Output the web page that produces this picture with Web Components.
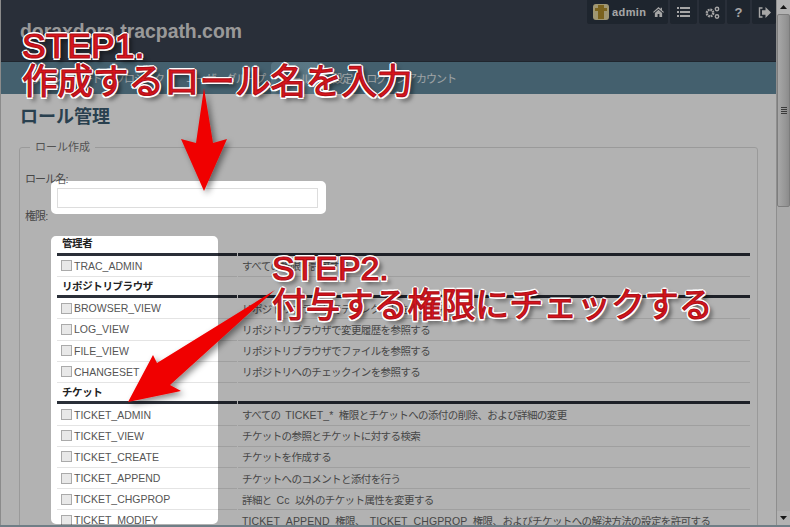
<!DOCTYPE html>
<html lang="ja">
<head>
<meta charset="utf-8">
<title>ロール管理</title>
<style>
  html, body { margin: 0; height: 100%; overflow: hidden; }
  body { font-family: "Liberation Sans", "Noto Sans CJK JP", sans-serif; }
</style>
</head>
<body>
<app-shell>
  <page-header></page-header>
  <site-tabs></site-tabs>
  <role-page></role-page>
</app-shell>
<script>
const FONT = '"Liberation Sans", "Noto Sans CJK JP", sans-serif';

class AppShell extends HTMLElement {
  constructor() {
    super();
    this.attachShadow({ mode: 'open' });
    this.shadowRoot.innerHTML = `
      <style>
        :host { display: flex; flex-direction: column; position: relative; width: 790px; height: 527px; overflow: hidden; background: #fff; }
        .body { flex: 1; min-height: 0; display: flex; }
        .main { flex: 1; min-width: 0; display: flex; flex-direction: column; overflow: hidden; border-left: 1px solid #c8c8c8; }
        .edge { flex: none; height: 2px; background: #9fb5c0; }
      </style>
      <div class="body">
        <div class="main"><slot></slot></div>
        <fake-scrollbar></fake-scrollbar>
      </div>
      <div class="edge"></div>
      <tutorial-overlay></tutorial-overlay>
    `;
  }
}

class FakeScrollbar extends HTMLElement {
  constructor() {
    super();
    this.attachShadow({ mode: 'open' });
    this.shadowRoot.innerHTML = `
      <style>
        :host { display: flex; flex-direction: column; flex: none; width: 14px; height: 100%; background: #f4f4f4; border-left: 1px solid #ccc; box-sizing: border-box; }
        .btn { flex: none; height: 14px; background: #fff; display: flex; align-items: center; justify-content: center; }
        .thumb { flex: none; height: 193px; background: linear-gradient(90deg, #f0f0f0, #d6d6d6 70%, #c8c8c8); border: 1px solid #b4b4b4; border-radius: 2px; box-sizing: border-box; display: flex; align-items: center; justify-content: center; }
        .grip { width: 6px; height: 7px; background: repeating-linear-gradient(#555 0 1px, transparent 1px 2px); }
        .track { flex: 1; }
        svg { display: block; }
      </style>
      <div class="btn"><svg width="7" height="4"><path d="M0 4L3.500 0L7 4z" fill="#222"/></svg></div>
      <div class="thumb"><div class="grip"></div></div>
      <div class="track"></div>
      <div class="btn"><svg width="7" height="4"><path d="M0 0L3.500 4L7 0z" fill="#222"/></svg></div>
    `;
  }
}

class PageHeader extends HTMLElement {
  constructor() {
    super();
    this.attachShadow({ mode: 'open' });
    this.shadowRoot.innerHTML = `
      <style>
        :host { display: flex; flex: none; justify-content: space-between; align-items: flex-start; height: 62px; background: #3c4452; border-bottom: 1px solid #2f3742; box-sizing: border-box; font-family: ${FONT}; }
        h1 { margin: 21px 0 0 19px; font-size: 19.400px; line-height: 20px; color: #dcdcdc; font-weight: bold; }
        .tools { display: flex; gap: 2px; }
        .cell { background: #2c3542; display: flex; align-items: center; justify-content: center; height: 24px; color: #eee; border-radius: 0 0 2px 2px; }
        .cell.user { width: 81px; padding-left: 6px; justify-content: flex-start; box-sizing: border-box; font-size: 11px; font-weight: bold; letter-spacing: .4px; }
        .cell.user span { margin: 0 7px 0 3px; }
        svg { display: block; }
        .q { font-size: 13px; font-weight: bold; }
      </style>
      <h1>doraxdora.tracpath.com</h1>
      <div class="tools">
        <div class="cell user">
          <svg width="16" height="16" viewBox="0 0 16 16"><rect width="16" height="16" rx="3" fill="#e6d9a4"/><path d="M5 1h6v3h3v3h-3v8H5V7H2V4h3z" fill="#b08f2c"/></svg>
          <span>admin</span>
          <svg width="11" height="10" viewBox="0 0 12 11"><path d="M6 0L0 5.500l.8.8L6 1.800l5.200 4.500.8-.8L9.800 3.600V.8H8.400v1.500zM2 6.500V11h3V7.800h2V11h3V6.500L6 3z" fill="#eee"/></svg>
        </div>
        <div class="cell" style="width:27px"><svg width="13" height="10" viewBox="0 0 13 10"><path d="M0 0h2v2H0zM3 0h10v2H3zM0 4h2v2H0zM3 4h10v2H3zM0 8h2v2H0zM3 8h10v2H3z" fill="#eee"/></svg></div>
        <div class="cell" style="width:26px"><svg width="15" height="13" viewBox="0 0 15 13"><circle cx="5" cy="7" r="3.200" fill="none" stroke="#eee" stroke-width="2.400" stroke-dasharray="1.800 .7"/><circle cx="12" cy="3" r="1.700" fill="none" stroke="#eee" stroke-width="1.400"/><circle cx="12" cy="10.500" r="1.700" fill="none" stroke="#eee" stroke-width="1.400"/></svg></div>
        <div class="cell q" style="width:23px">?</div>
        <div class="cell" style="width:24px"><svg width="13" height="11" viewBox="0 0 13 11"><path d="M4.500 1H1.500v9h3" fill="none" stroke="#eee" stroke-width="1.400"/><path d="M7.500 0L13 5.500L7.500 11V7.800H4V3.200h3.500z" fill="#eee"/></svg></div>
      </div>
    `;
  }
}

class SiteTabs extends HTMLElement {
  constructor() {
    super();
    this.attachShadow({ mode: 'open' });
    this.shadowRoot.innerHTML = `
      <style>
        :host { display: flex; flex: none; height: 32px; padding-left: 25px; background: #628a9e; font-family: ${FONT}; font-size: 11px; color: #e4eaee; white-space: nowrap; letter-spacing: -1px; }
        a { display: flex; align-items: center; padding: 0 6px; border-radius: 4px 4px 0 0; }
        a.on { padding: 0 9px; background: linear-gradient(90deg, #7ba6ba, #83adc0); }
        a.set { padding: 0 8px 0 13px; }
      </style>
      <a>ダッシュボード</a>
      <a>プロジェクト</a>
      <a>ユーザーグループ</a>
      <a class="on">ロール</a>
      <a class="set">設定</a>
      <a>ログインアカウント</a>
    `;
  }
}

class PermTable extends HTMLElement {
  constructor() {
    super();
    this.attachShadow({ mode: 'open' });
    const groups = [
      ['管理者', [['TRAC_ADMIN', 'すべての権限を許可する']]],
      ['リポジトリブラウザ', [
        ['BROWSER_VIEW', 'リポジトリブラウザでディレクトリを参照する'],
        ['LOG_VIEW', 'リポジトリブラウザで変更履歴を参照する'],
        ['FILE_VIEW', 'リポジトリブラウザでファイルを参照する'],
        ['CHANGESET', 'リポジトリへのチェックインを参照する']
      ]],
      ['チケット', [
        ['TICKET_ADMIN', 'すべての TICKET_* 権限とチケットへの添付の削除、および詳細の変更'],
        ['TICKET_VIEW', 'チケットの参照とチケットに対する検索'],
        ['TICKET_CREATE', 'チケットを作成する'],
        ['TICKET_APPEND', 'チケットへのコメントと添付を行う'],
        ['TICKET_CHGPROP', '詳細と Cc 以外のチケット属性を変更する'],
        ['TICKET_MODIFY', 'TICKET_APPEND 権限、 TICKET_CHGPROP 権限、およびチケットへの解決方法の設定を許可する']
      ]]
    ];
    const latin = s => s.replace(/[A-Za-z_*]+ ?/g, m => `<span class="l">${m}</span>`);
    this.shadowRoot.innerHTML = `
      <style>
        :host { display: block; font-family: ${FONT}; font-size: 10.500px; color: #555; }
        .grp, .row { display: grid; grid-template-columns: 180px 1fr; column-gap: 1px; }
        .grp { height: 21.500px; }
        .grp b, .grp i { display: block; border-bottom: 3px solid #2a2f38; height: 21.500px; box-sizing: border-box; font-style: normal; }
        .grp b { padding: 2px 0 0 5px; font-size: 10.500px; line-height: 14px; color: #222; letter-spacing: -.4px; }
        .row { height: 21.200px; }
        .row > div { border-bottom: 1px solid #e4e4e4; display: flex; align-items: center; box-sizing: border-box; white-space: pre; }
        .name { padding-left: 4px; gap: 2px; }
        .desc { padding-left: 4px; letter-spacing: -.6px; word-spacing: 2.500px; color: #666; }
        .l { letter-spacing: .1px; }
        .box { width: 9px; height: 9px; flex: none; border: 1px solid #aaa; background: #e8e8e8; }
      </style>
      ${groups.map(([title, rows]) => `
        <div class="grp"><b>${title}</b><i></i></div>
        ${rows.map(([name, desc]) => `
          <div class="row">
            <div class="name"><span class="box"></span>${name}</div>
            <div class="desc"><span>${latin(desc)}</span></div>
          </div>`).join('')}
      `).join('')}
    `;
  }
}

class RolePage extends HTMLElement {
  constructor() {
    super();
    this.attachShadow({ mode: 'open' });
    this.shadowRoot.innerHTML = `
      <style>
        :host { display: block; flex: 1; min-height: 0; padding: 0 18px; background: #fff; font-family: ${FONT}; font-size: 11px; color: #666; }
        h2 { margin: 0; padding: 13px 0 0 1px; height: 46px; box-sizing: border-box; font-size: 18px; line-height: 20px; color: #3c5c72; }
        fieldset { margin: 0; padding: 18px 5px 0; border: 1px solid #ddd; border-radius: 3px; min-width: 0; height: 600px; box-sizing: border-box; }
        legend { margin-left: 5px; padding: 0 5px; font-size: 11px; line-height: 14px; color: #777; }
        label { display: block; line-height: 14px; letter-spacing: -.9px; }
        .input { width: 261px; height: 20px; box-sizing: border-box; border: 1px solid #ddd; background: #fff; margin: 2px 0 0 32px; }
        .perm { margin-top: 1px; }
        perm-table { margin: 11px 2px 0 32px; }
      </style>
      <h2>ロール管理</h2>
      <fieldset>
        <legend>ロール作成</legend>
        <label>ロール名:</label>
        <div class="input"></div>
        <label class="perm">権限:</label>
        <perm-table></perm-table>
      </fieldset>
    `;
  }
}

class TutorialOverlay extends HTMLElement {
  constructor() {
    super();
    this.attachShadow({ mode: 'open' });
    this.shadowRoot.innerHTML = `
      <style>
        :host { position: absolute; inset: 0; display: block; pointer-events: none; font-family: ${FONT}; }
        svg { position: absolute; inset: 0; }
        .step { position: absolute; margin: 0; color: #d8141c; font-weight: normal; white-space: nowrap;
          -webkit-text-stroke: 1.200px #b01018;
          text-shadow: -2px 0 0 #fff, 2px 0 0 #fff, 0 -2px 0 #fff, 0 2px 0 #fff, -1.500px -1.500px 0 #fff, 1.500px 1.500px 0 #fff, -1.500px 1.500px 0 #fff, 1.500px -1.500px 0 #fff, 4px 4px 4px rgba(0,0,0,.6); }
        .s1 { left: 22px; top: 28px; font-size: 35.500px; line-height: 36px; }
        .s2 { left: 272px; top: 250px; font-size: 33.900px; line-height: 37px; }
      </style>
      <svg width="790" height="527" viewBox="0 0 790 527">
        <defs>
          <filter id="sh" x="-30%" y="-30%" width="160%" height="160%"><feDropShadow dx="3" dy="3" stdDeviation="3" flood-color="#000" flood-opacity=".45"/></filter>
        </defs>
        <path fill="#000" fill-opacity=".3" fill-rule="evenodd" d="M0 0H790V527H0Z
          M56 181H321a5 5 0 0 1 5 5V209a5 5 0 0 1-5 5H56a5 5 0 0 1-5-5V186a5 5 0 0 1 5-5Z
          M56 236H213a5 5 0 0 1 5 5V519a5 5 0 0 1-5 5H56a5 5 0 0 1-5-5V241a5 5 0 0 1 5-5Z"/>
        <path filter="url(#sh)" fill="#f00000" d="M204 88L213 143L227 139L204 191L181 139L196 143Z"/>
        <path filter="url(#sh)" fill="#f00000" d="M275 290L170 385L181 391L128 402L153 355L157 363Z"/>
      </svg>
      <p class="step s1">STEP1.<br>作成するロール名を入力</p>
      <p class="step s2">STEP2.<br>付与する権限にチェックする</p>
    `;
  }
}

customElements.define('app-shell', AppShell);
customElements.define('fake-scrollbar', FakeScrollbar);
customElements.define('page-header', PageHeader);
customElements.define('site-tabs', SiteTabs);
customElements.define('perm-table', PermTable);
customElements.define('role-page', RolePage);
customElements.define('tutorial-overlay', TutorialOverlay);
</script>
</body>
</html>
